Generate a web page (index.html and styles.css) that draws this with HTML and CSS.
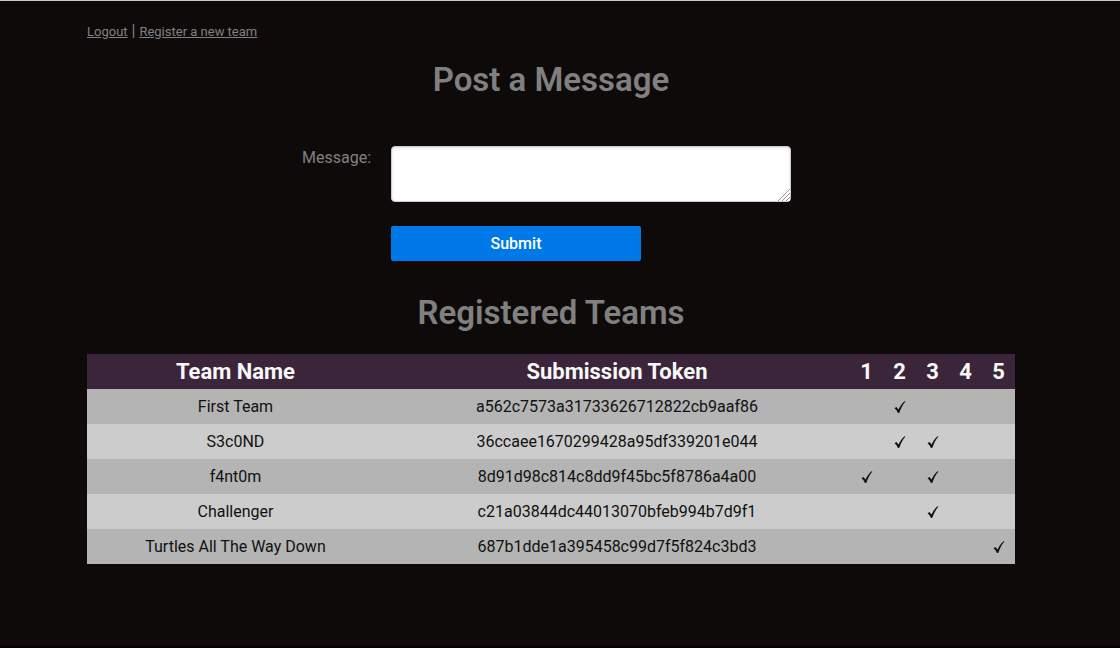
FILE: index.html
```html
<!DOCTYPE html>
<html lang="en">
<head>
<meta charset="utf-8">
<title>Registered Teams</title>
<link rel="stylesheet" href="styles.css">
</head>
<body>
<svg width="0" height="0" class="symbols" aria-hidden="true">
  <symbol id="check" viewBox="0 0 12 14">
    <path d="M.5 8.2 2.4 6.9 4.5 9.6C6 6.200 8 3.300 10.500 1.200L11.400 1.600C8.700 4.900 6.700 8.600 5.400 12.800L3.900 13C3.100 11 2 9.200.5 8.200Z"/>
  </symbol>
</svg>
<main class="content">
  <nav class="nav"><a href="#logout">Logout</a> | <a href="#register">Register a new team</a></nav>
  <h1 class="heading">Post a Message</h1>
  <form class="form">
    <label class="label" for="message">Message:</label>
    <textarea class="message" id="message" name="message"></textarea>
    <button class="submit" type="submit">Submit</button>
  </form>
  <h1 class="heading">Registered Teams</h1>
  <table class="teams">
    <colgroup><col class="col-name"><col class="col-token"><col class="col-flag" span="5"></colgroup>
    <thead>
      <tr><th>Team Name</th><th>Submission Token</th><th>1</th><th>2</th><th>3</th><th>4</th><th>5</th></tr>
    </thead>
    <tbody>
      <tr><td>First Team</td><td>a562c7573a31733626712822cb9aaf86</td><td></td><td><svg class="check" role="img" aria-label="Solved"><use href="#check"/></svg></td><td></td><td></td><td></td></tr>
      <tr><td>S3c0ND</td><td>36ccaee1670299428a95df339201e044</td><td></td><td><svg class="check" role="img" aria-label="Solved"><use href="#check"/></svg></td><td><svg class="check" role="img" aria-label="Solved"><use href="#check"/></svg></td><td></td><td></td></tr>
      <tr><td>f4nt0m</td><td>8d91d98c814c8dd9f45bc5f8786a4a00</td><td><svg class="check" role="img" aria-label="Solved"><use href="#check"/></svg></td><td></td><td><svg class="check" role="img" aria-label="Solved"><use href="#check"/></svg></td><td></td><td></td></tr>
      <tr><td>Challenger</td><td>c21a03844dc44013070bfeb994b7d9f1</td><td></td><td></td><td><svg class="check" role="img" aria-label="Solved"><use href="#check"/></svg></td><td></td><td></td></tr>
      <tr><td>Turtles All The Way Down</td><td>687b1dde1a395458c99d7f5f824c3bd3</td><td></td><td></td><td></td><td></td><td><svg class="check" role="img" aria-label="Solved"><use href="#check"/></svg></td></tr>
    </tbody>
  </table>
</main>
</body>
</html>
```
FILE: styles.css
```css
* { box-sizing: border-box; }

body {
  margin: 0;
  min-height: 100vh;
  border-top: 1px solid #c8c8c4;
  border-bottom: 2px solid #000;
  background: #0f0a0a;
  color: #808080;
  font-family: Roboto, "DejaVu Sans", sans-serif;
  font-size: 16px;
  line-height: 19px;
}

.symbols { display: none; }

.content {
  margin: 0 105px 0 87px;
  padding-top: 20px;
}

.nav a {
  color: #808080;
  font-size: 13px;
}

.heading {
  margin: 19px 0 0;
  font-size: 33px;
  font-weight: 600;
  line-height: 40px;
  text-align: center;
}

.form {
  display: grid;
  grid-template-columns: 284px 400px;
  column-gap: 20px;
  row-gap: 24px;
  margin: 46px 0 32px;
}

.label {
  padding-top: 2px;
  text-align: right;
}

.message {
  height: 56px;
  padding: 8px 10px;
  border: 1px solid #ccc;
  border-radius: 4px;
  background: #fff;
  box-shadow: inset 0 1px 3px #ddd;
  font: inherit;
  resize: both;
}

.message::-webkit-resizer {
  background: linear-gradient(135deg, #fff 58%, #999 58% 63%, #fff 63% 71%, #999 71% 76%, #fff 76% 84%, #888 84% 89%, #fff 89%);
}

.submit {
  grid-column: 2;
  width: 250px;
  height: 35px;
  border: 0;
  border-radius: 2px;
  background: #0078e7;
  color: #fff;
  font: inherit;
  font-weight: 500;
}

.teams {
  width: 100%;
  margin-top: 21px;
  border-collapse: collapse;
  table-layout: fixed;
  text-align: center;
}

.col-name { width: 32%; }
.col-flag { width: 33px; }

.teams th,
.teams td {
  height: 35px;
  padding: 0;
}

.teams th {
  background: #3b253b;
  color: #f8f8f8;
  font-size: 22px;
  font-weight: 700;
}

.teams td { color: #111; }
.teams tbody tr:nth-child(odd) { background: #b4b4b4; }
.teams tbody tr:nth-child(even) { background: #ccc; }

.check {
  display: block;
  width: 12px;
  height: 14px;
  margin: 0 auto;
  fill: #111;
}
```
